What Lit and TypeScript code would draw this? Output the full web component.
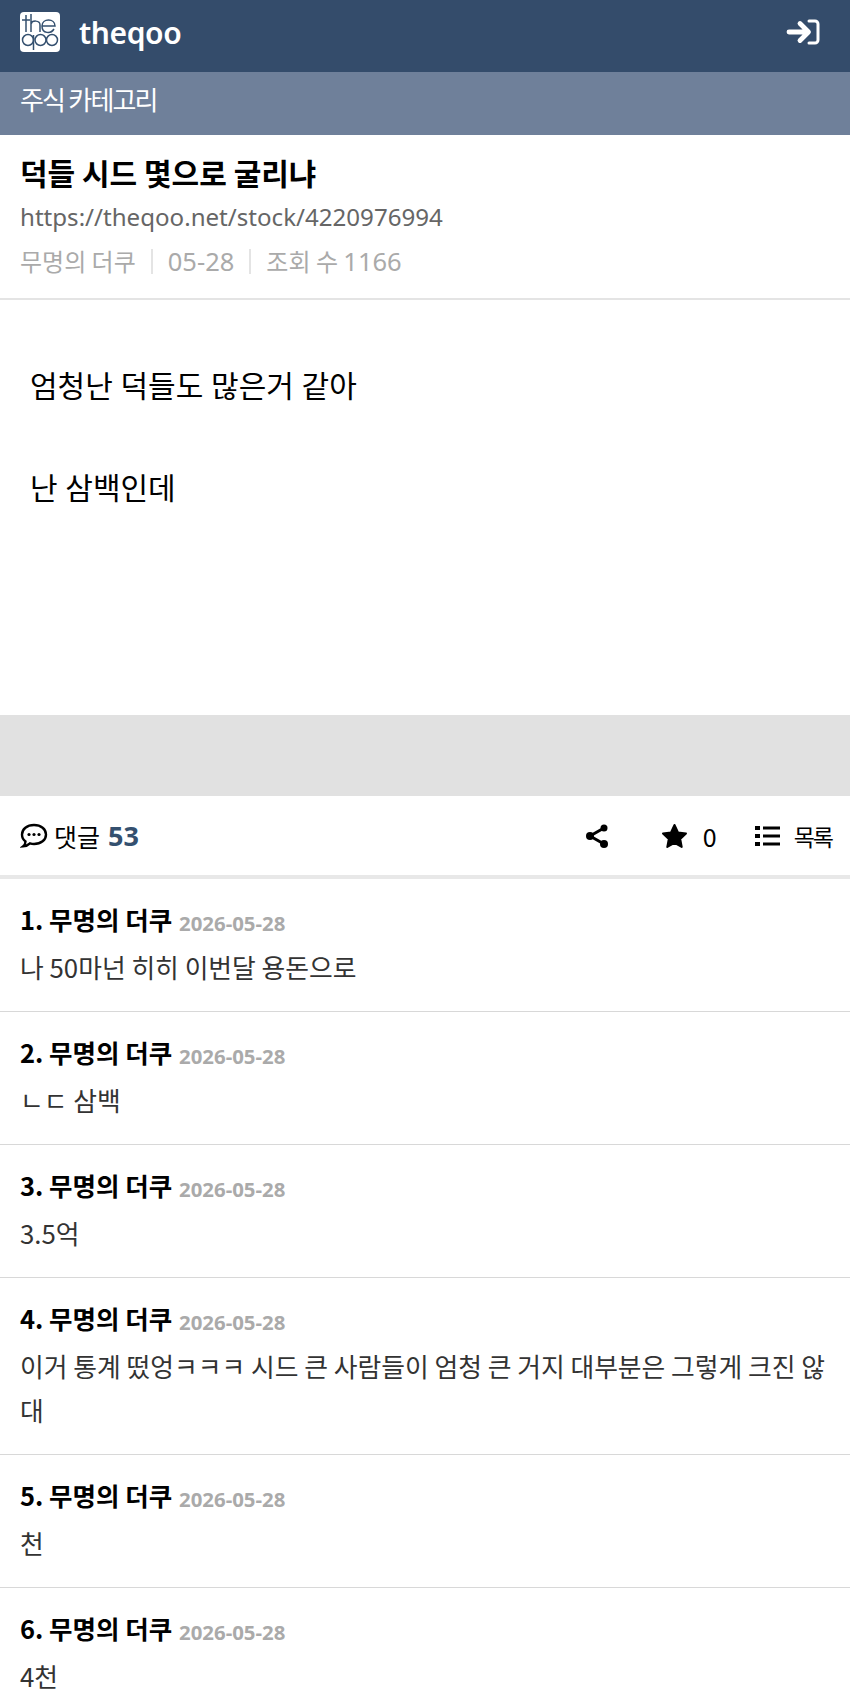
import { LitElement, html, css } from "lit";
import { customElement } from "lit/decorators.js";

const comments = [
  ["1", "나 50마넌 히히 이번달 용돈으로"],
  ["2", "ㄴㄷ 삼백"],
  ["3", "3.5억"],
  ["4", "이거 통계 떴엉ㅋㅋㅋ 시드 큰 사람들이 엄청 큰 거지 대부분은 그렇게 크진 않대"],
  ["5", "천"],
  ["6", "4천"],
];

@customElement("app-root")
export class AppRoot extends LitElement {
  static styles = css`
    :host { display: block; height: 1708px; overflow: hidden; background: #fff;
      font-family: "Noto Sans CJK KR", "Noto Sans", sans-serif; color: #000; }
    .top { height: 72px; background: #344c6b; display: flex; align-items: center; justify-content: space-between; padding: 0 30px 8px 20px; box-sizing: border-box; }
    .brand { display: flex; align-items: center; gap: 19px; color: #fff; font: 600 30px "Noto Sans", sans-serif; letter-spacing: -0.4px; }
    .brand svg, .top > svg { display: block; }
    .sub { height: 63px; background: #6f809a; color: #fff; display: flex; align-items: center; padding: 0 20px 10px; font-size: 26px; letter-spacing: -1.800px; box-sizing: border-box; }
    .head { height: 165px; padding: 0 20px; box-sizing: border-box; border-bottom: 2px solid #e4e4e4; display: flex; flex-direction: column; }
    .title { font-size: 30px; font-weight: 700; line-height: 44px; margin-top: 15px; }
    .url { font: 400 24.100px/38px "Noto Sans", sans-serif; color: #666; margin-top: 4px; }
    .meta { display: flex; align-items: center; color: #aaa; font-size: 24px; line-height: 44px; margin-top: 3px; }
    .meta i { width: 2px; height: 25px; background: #e4e4e4; margin: 0 15px; }
    .num { font-family: "Noto Sans", sans-serif; font-size: 25.500px; }
    .views { white-space: pre; }
    .body { height: 415px; box-sizing: border-box; padding: 33px 30px 0; font-size: 30px; line-height: 102px; word-spacing: 1px; }
    .body p { margin: 0; }
    .gray { height: 81px; background: #e1e1e1; }
    .bar { height: 79px; display: flex; align-items: center; padding: 0 18px 0 20px; font-size: 25px; box-sizing: border-box; }
    .bar b { color: #34506f; font-family: "Noto Sans", sans-serif; font-size: 27px; margin-left: 8px; }
    .bar svg { display: block; }
    .talk { margin-left: 6px; }
    .spacer { flex: 1; }
    .star { margin-left: 52px; }
    .zero { margin-left: 15px; width: 14px; }
    .list { margin-left: 38px; }
    .mok { margin-left: 14px; font-size: 23px; letter-spacing: -2px; }
    .rule { height: 4px; background: #e8e8e8; }
    .c { padding: 19px 20px 22.500px; border-bottom: 1px solid #d8d8d8; }
    .c .h { font-size: 25.500px; font-weight: 700; line-height: 42px; }
    .c .h span { font: 700 20.400px "Noto Sans", sans-serif; color: #aaa; margin-left: 1px; position: relative; top: 1px; }
    .c .t { font-size: 25.800px; line-height: 43.500px; color: #333; margin-top: 5px; word-break: break-all; }
  `;

  render() {
    return html`
      <div class="top">
        <div class="brand">
          <svg width="40" height="40" viewBox="0 0 40 40">
            <rect width="40" height="40" rx="4" fill="#fff"/>
            <g fill="none" stroke="#34506f" stroke-width="1.500">
              <path d="M6 3v17M2 8h8M11 2v18M11 12c1-4 9-4 9 1v7"/>
              <path d="M22 14h13c0-8-13-8-13 0s9 8 12 3"/>
              <circle cx="8" cy="28" r="5.500"/><path d="M13.500 23v15"/>
              <circle cx="20.500" cy="28" r="5.500"/><circle cx="32" cy="28" r="5.500"/>
            </g>
          </svg>
          <span>theqoo</span>
        </div>
        <svg width="34" height="26" viewBox="0 0 34 26" fill="none" stroke="#fff" stroke-linecap="round" stroke-linejoin="round">
          <path d="M3 13h18M14 4.500l8.500 8.500-8.500 8.500" stroke-width="4.800"/>
          <path d="M23 2h6a3 3 0 0 1 3 3v16a3 3 0 0 1-3 3h-6" stroke-width="3"/>
        </svg>
      </div>
      <div class="sub">주식 카테고리</div>
      <div class="head">
        <div class="title">덕들 시드 몇으로 굴리냐</div>
        <div class="url">https://theqoo.net/stock/4220976994</div>
        <div class="meta">무명의 더쿠<i></i><span class="num">05-28</span><i></i><span class="views">조회 수 <span class="num">1166</span></span></div>
      </div>
      <div class="body"><p>엄청난 덕들도 많은거 같아</p><p>난 삼백인데</p></div>
      <div class="gray"></div>
      <div class="bar">
        <svg width="28" height="26" viewBox="0 0 28 26" fill="none" stroke="#000" stroke-width="2.400"><path d="M14 2c7 0 12 4 12 9.500s-5 9.500-12 9.500c-2 0-3-.3-4-.6-1.500 1.500-4 2.800-7 3 1.500-1.200 2.500-3 2.500-5C3.500 17 2 14.500 2 11.500 2 6 7 2 14 2z"/><g fill="#000" stroke="none"><circle cx="9" cy="11.500" r="1.600"/><circle cx="14" cy="11.500" r="1.600"/><circle cx="19" cy="11.500" r="1.600"/></g></svg>
        <span class="talk">댓글</span><b>53</b>
        <div class="spacer"></div>
        <svg width="24" height="26" viewBox="0 0 24 26" stroke="#000" stroke-width="3" fill="#000"><path d="M19 5 5 13l14 8" fill="none"/><circle cx="19" cy="5" r="3.500" stroke="none"/><circle cx="5" cy="13" r="4" stroke="none"/><circle cx="19" cy="21" r="4" stroke="none"/></svg>
        <svg class="star" width="27" height="26" viewBox="0 0 27 26" fill="#000" stroke="#000" stroke-width="2" stroke-linejoin="round"><path d="m13.500 2 3.500 7.500 8 1-5.800 5.500 1.500 8-7.200-4-7.200 4 1.500-8L2 10.500l8-1z"/></svg>
        <span class="zero">0</span>
        <svg class="list" width="25" height="20" viewBox="0 0 25 20" fill="#000"><rect y="0" width="5" height="4"/><rect y="8" width="5" height="4"/><rect y="16" width="5" height="4"/><rect x="8" y="0.500" width="17" height="3"/><rect x="8" y="8.500" width="17" height="3"/><rect x="8" y="16.500" width="17" height="3"/></svg>
        <span class="mok">목록</span>
      </div>
      <div class="rule"></div>
      ${comments.map(([n, t]) => html`
        <div class="c">
          <div class="h">${n}. 무명의 더쿠 <span>2026-05-28</span></div>
          <div class="t">${t}</div>
        </div>`)}
    `;
  }
}
